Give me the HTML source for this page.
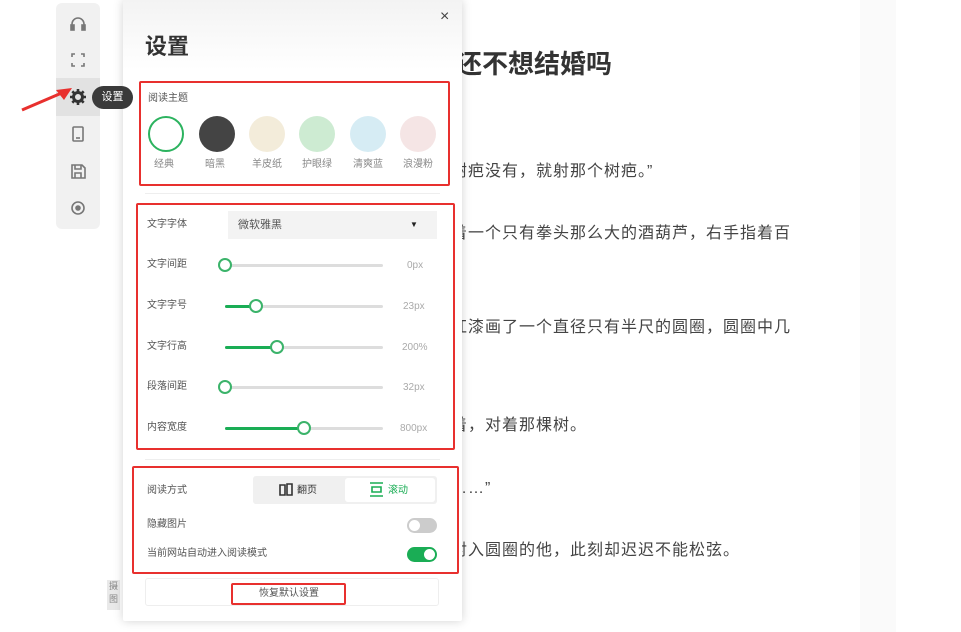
<!DOCTYPE html>
<html><head><meta charset="utf-8"><style>
*{margin:0;padding:0;box-sizing:border-box}
body{width:961px;height:632px;overflow:hidden;background:#fff;font-family:"Liberation Sans","Noto Sans CJK SC",sans-serif;position:relative;color:#333}
.abs{position:absolute}
.art{left:100px;top:0;width:760px;height:632px;background:#fff}
.gray{left:860px;top:0;width:36px;height:632px;background:#fafafa}
.t{position:absolute;white-space:nowrap;font-size:16px;color:#444;line-height:20px;letter-spacing:1px}
.side{left:56px;top:3px;width:44px;height:226px;background:#f1f1f1;border-radius:6px}
.panel{left:123px;top:0;width:339px;height:621px;background:#fff;box-shadow:0 0 10px rgba(0,0,0,.18);border-radius:2px}
.red{position:absolute;border:2px solid #e8302e;border-radius:2px}
.lb{position:absolute;font-size:10px;color:#555;white-space:nowrap;line-height:12px}
.c{position:absolute;width:36px;height:36px;border-radius:50%}
.track{position:absolute;left:225px;width:158px;height:3px;background:#ddd;border-radius:2px}
.fill{position:absolute;left:225px;height:3px;background:#1aad55;border-radius:2px}
.th{position:absolute;width:14px;height:14px;border-radius:50%;border:2px solid #3bb36a;background:#fff}
</style></head><body>
<div class="abs gray"></div>
<div class="abs art"></div>
<div class="t" style="left:456px;top:49px;font-size:26px;font-weight:bold;color:#333;line-height:30px;letter-spacing:0">还不想结婚吗</div>
<div class="t" style="left:451px;top:162px">树疤没有，就射那个树疤。”</div>
<div class="t" style="left:451px;top:224px">着一个只有拳头那么大的酒葫芦，右手指着百</div>
<div class="t" style="left:451px;top:318px">红漆画了一个直径只有半尺的圆圈，圆圈中几</div>
<div class="t" style="left:451px;top:416px">着，对着那棵树。</div>
<div class="t" style="left:451px;top:479px">……”</div>
<div class="t" style="left:451px;top:541px">射入圆圈的他，此刻却迟迟不能松弦。</div>

<div class="abs side"></div>
<div class="abs" style="left:56px;top:78px;width:44px;height:38px;background:#e2e2e2"></div>
<svg class="abs" style="left:56px;top:0" width="44" height="230" fill="none" stroke="#777" stroke-width="1.6">
<path d="M16 28v-4a6 6 0 0 1 12 0v4"/><rect x="15" y="25" width="3" height="5" fill="#777"/><rect x="26" y="25" width="3" height="5" fill="#777"/>
<path d="M16 57v-3h3M25 54h3v3M28 63v3h-3M19 66h-3v-3"/>
<g stroke="#333" stroke-width="2.6"><path d="M22 89v3M22 102v3M14 97h3M27 97h3M16.3 91.3l2.1 2.1M25.6 100.6l2.1 2.1M16.3 102.7l2.1-2.1M25.6 93.4l2.1-2.1"/></g>
<circle cx="22" cy="97" r="4.5" stroke-width="3" stroke="#333"/>
<rect x="17" y="127" width="10" height="14" rx="1"/><path d="M20 138h4"/>
<path d="M16 165h10l3 3v10H16z M19 165v4h6v-4 M19 178v-5h6v5"/>
<circle cx="22" cy="208" r="6"/><circle cx="22" cy="208" r="2" fill="#777"/>
</svg>
<svg class="abs" style="left:18px;top:82px" width="56" height="32"><path d="M4 28L46 10" stroke="#e8302e" stroke-width="3"/><path d="M54 6L38 8L46 18Z" fill="#e8302e"/></svg>
<div class="abs" style="left:107px;top:580px;width:13px;height:30px;background:#e9e9e9;font-size:9px;color:#888;line-height:13px;text-align:center">摄<br>图</div>

<div class="abs panel">
<div class="abs" style="left:0;top:0;width:339px;height:70px;background:linear-gradient(#f3f3f3,#fff)"></div>
<div class="abs" style="left:22px;top:29px;font-size:22px;font-weight:bold;color:#333">设置</div>
<div class="abs" style="left:317px;top:8px;font-size:16px;color:#444">×</div>

<div class="red" style="left:16px;top:81px;width:311px;height:105px"></div>
<div class="lb" style="left:25px;top:93px">阅读主题</div>
<div class="c" style="left:25px;top:116px;border:2.5px solid #2cb35f"></div>
<div class="c" style="left:76px;top:116px;background:#444"></div>
<div class="c" style="left:126px;top:116px;background:#f3ecda"></div>
<div class="c" style="left:176px;top:116px;background:#cdebd2"></div>
<div class="c" style="left:227px;top:116px;background:#d6ecf4"></div>
<div class="c" style="left:277px;top:116px;background:#f5e5e5"></div>
<div class="lb" style="left:31px;top:159px;color:#888">经典</div>
<div class="lb" style="left:82px;top:159px;color:#888">暗黑</div>
<div class="lb" style="left:129px;top:159px;color:#888">羊皮纸</div>
<div class="lb" style="left:179px;top:159px;color:#888">护眼绿</div>
<div class="lb" style="left:230px;top:159px;color:#888">清爽蓝</div>
<div class="lb" style="left:280px;top:159px;color:#888">浪漫粉</div>

<div class="abs" style="left:22px;top:193px;width:295px;height:1px;background:#eee"></div>
<div class="red" style="left:13px;top:203px;width:319px;height:247px"></div>
<div class="lb" style="left:24px;top:219px">文字字体</div>
<div class="abs" style="left:105px;top:211px;width:209px;height:28px;background:#f3f3f3"></div>
<div class="lb" style="left:115px;top:219px;font-size:11px">微软雅黑</div>
<div class="abs" style="left:287px;top:220px;font-size:8px;color:#222">▼</div>
</div>
<div class="abs" style="left:92px;top:86px;width:41px;height:23px;background:#3a3a3a;border-radius:12px;color:#fff;font-size:11px;line-height:23px;text-align:center">设置</div>

<div class="lb" style="left:147px;top:259px">文字间距</div><div class="track" style="top:264px"></div><div class="th" style="left:218px;top:258px"></div><div class="lb" style="left:407px;top:260px;color:#aaa">0px</div>
<div class="lb" style="left:147px;top:300px">文字字号</div><div class="track" style="top:305px"></div><div class="fill" style="top:305px;width:31px"></div><div class="th" style="left:249px;top:299px"></div><div class="lb" style="left:403px;top:301px;color:#aaa">23px</div>
<div class="lb" style="left:147px;top:341px">文字行高</div><div class="track" style="top:346px"></div><div class="fill" style="top:346px;width:52px"></div><div class="th" style="left:270px;top:340px"></div><div class="lb" style="left:402px;top:342px;color:#aaa">200%</div>
<div class="lb" style="left:147px;top:381px">段落间距</div><div class="track" style="top:386px"></div><div class="th" style="left:218px;top:380px"></div><div class="lb" style="left:403px;top:382px;color:#aaa">32px</div>
<div class="lb" style="left:147px;top:422px">内容宽度</div><div class="track" style="top:427px"></div><div class="fill" style="top:427px;width:79px"></div><div class="th" style="left:297px;top:421px"></div><div class="lb" style="left:400px;top:423px;color:#aaa">800px</div>

<div class="abs" style="left:145px;top:459px;width:295px;height:1px;background:#eee"></div>
<div class="red" style="left:132px;top:466px;width:327px;height:108px"></div>
<div class="lb" style="left:147px;top:485px">阅读方式</div>
<div class="abs" style="left:253px;top:476px;width:184px;height:28px;background:#f0f0f0;border-radius:3px"></div>
<div class="abs" style="left:345px;top:478px;width:90px;height:24px;background:#fff;border-radius:3px"></div>
<svg class="abs" style="left:279px;top:483px" width="14" height="13" fill="none" stroke="#333" stroke-width="1.6"><path d="M1 2h5v10H1zM8 1h5v11H8z"/></svg>
<div class="lb" style="left:297px;top:485px;color:#333">翻页</div>
<svg class="abs" style="left:369px;top:482px" width="15" height="15" fill="none" stroke="#1aad55" stroke-width="1.6"><path d="M1 1h13M1 14h13M3 5h9v5H3z"/></svg>
<div class="lb" style="left:388px;top:485px;color:#1aad55">滚动</div>
<div class="lb" style="left:147px;top:519px">隐藏图片</div>
<div class="abs" style="left:407px;top:518px;width:30px;height:15px;background:#ccc;border-radius:8px"></div>
<div class="abs" style="left:409px;top:520px;width:11px;height:11px;background:#fff;border-radius:50%"></div>
<div class="lb" style="left:147px;top:548px">当前网站自动进入阅读模式</div>
<div class="abs" style="left:407px;top:547px;width:30px;height:15px;background:#1aad55;border-radius:8px"></div>
<div class="abs" style="left:424px;top:549px;width:11px;height:11px;background:#fff;border-radius:50%"></div>

<div class="abs" style="left:145px;top:578px;width:294px;height:28px;border:1px solid #eee;border-radius:3px"></div>
<div class="red" style="left:231px;top:583px;width:115px;height:22px"></div>
<div class="lb" style="left:259px;top:588px;color:#555">恢复默认设置</div>
</body></html>
